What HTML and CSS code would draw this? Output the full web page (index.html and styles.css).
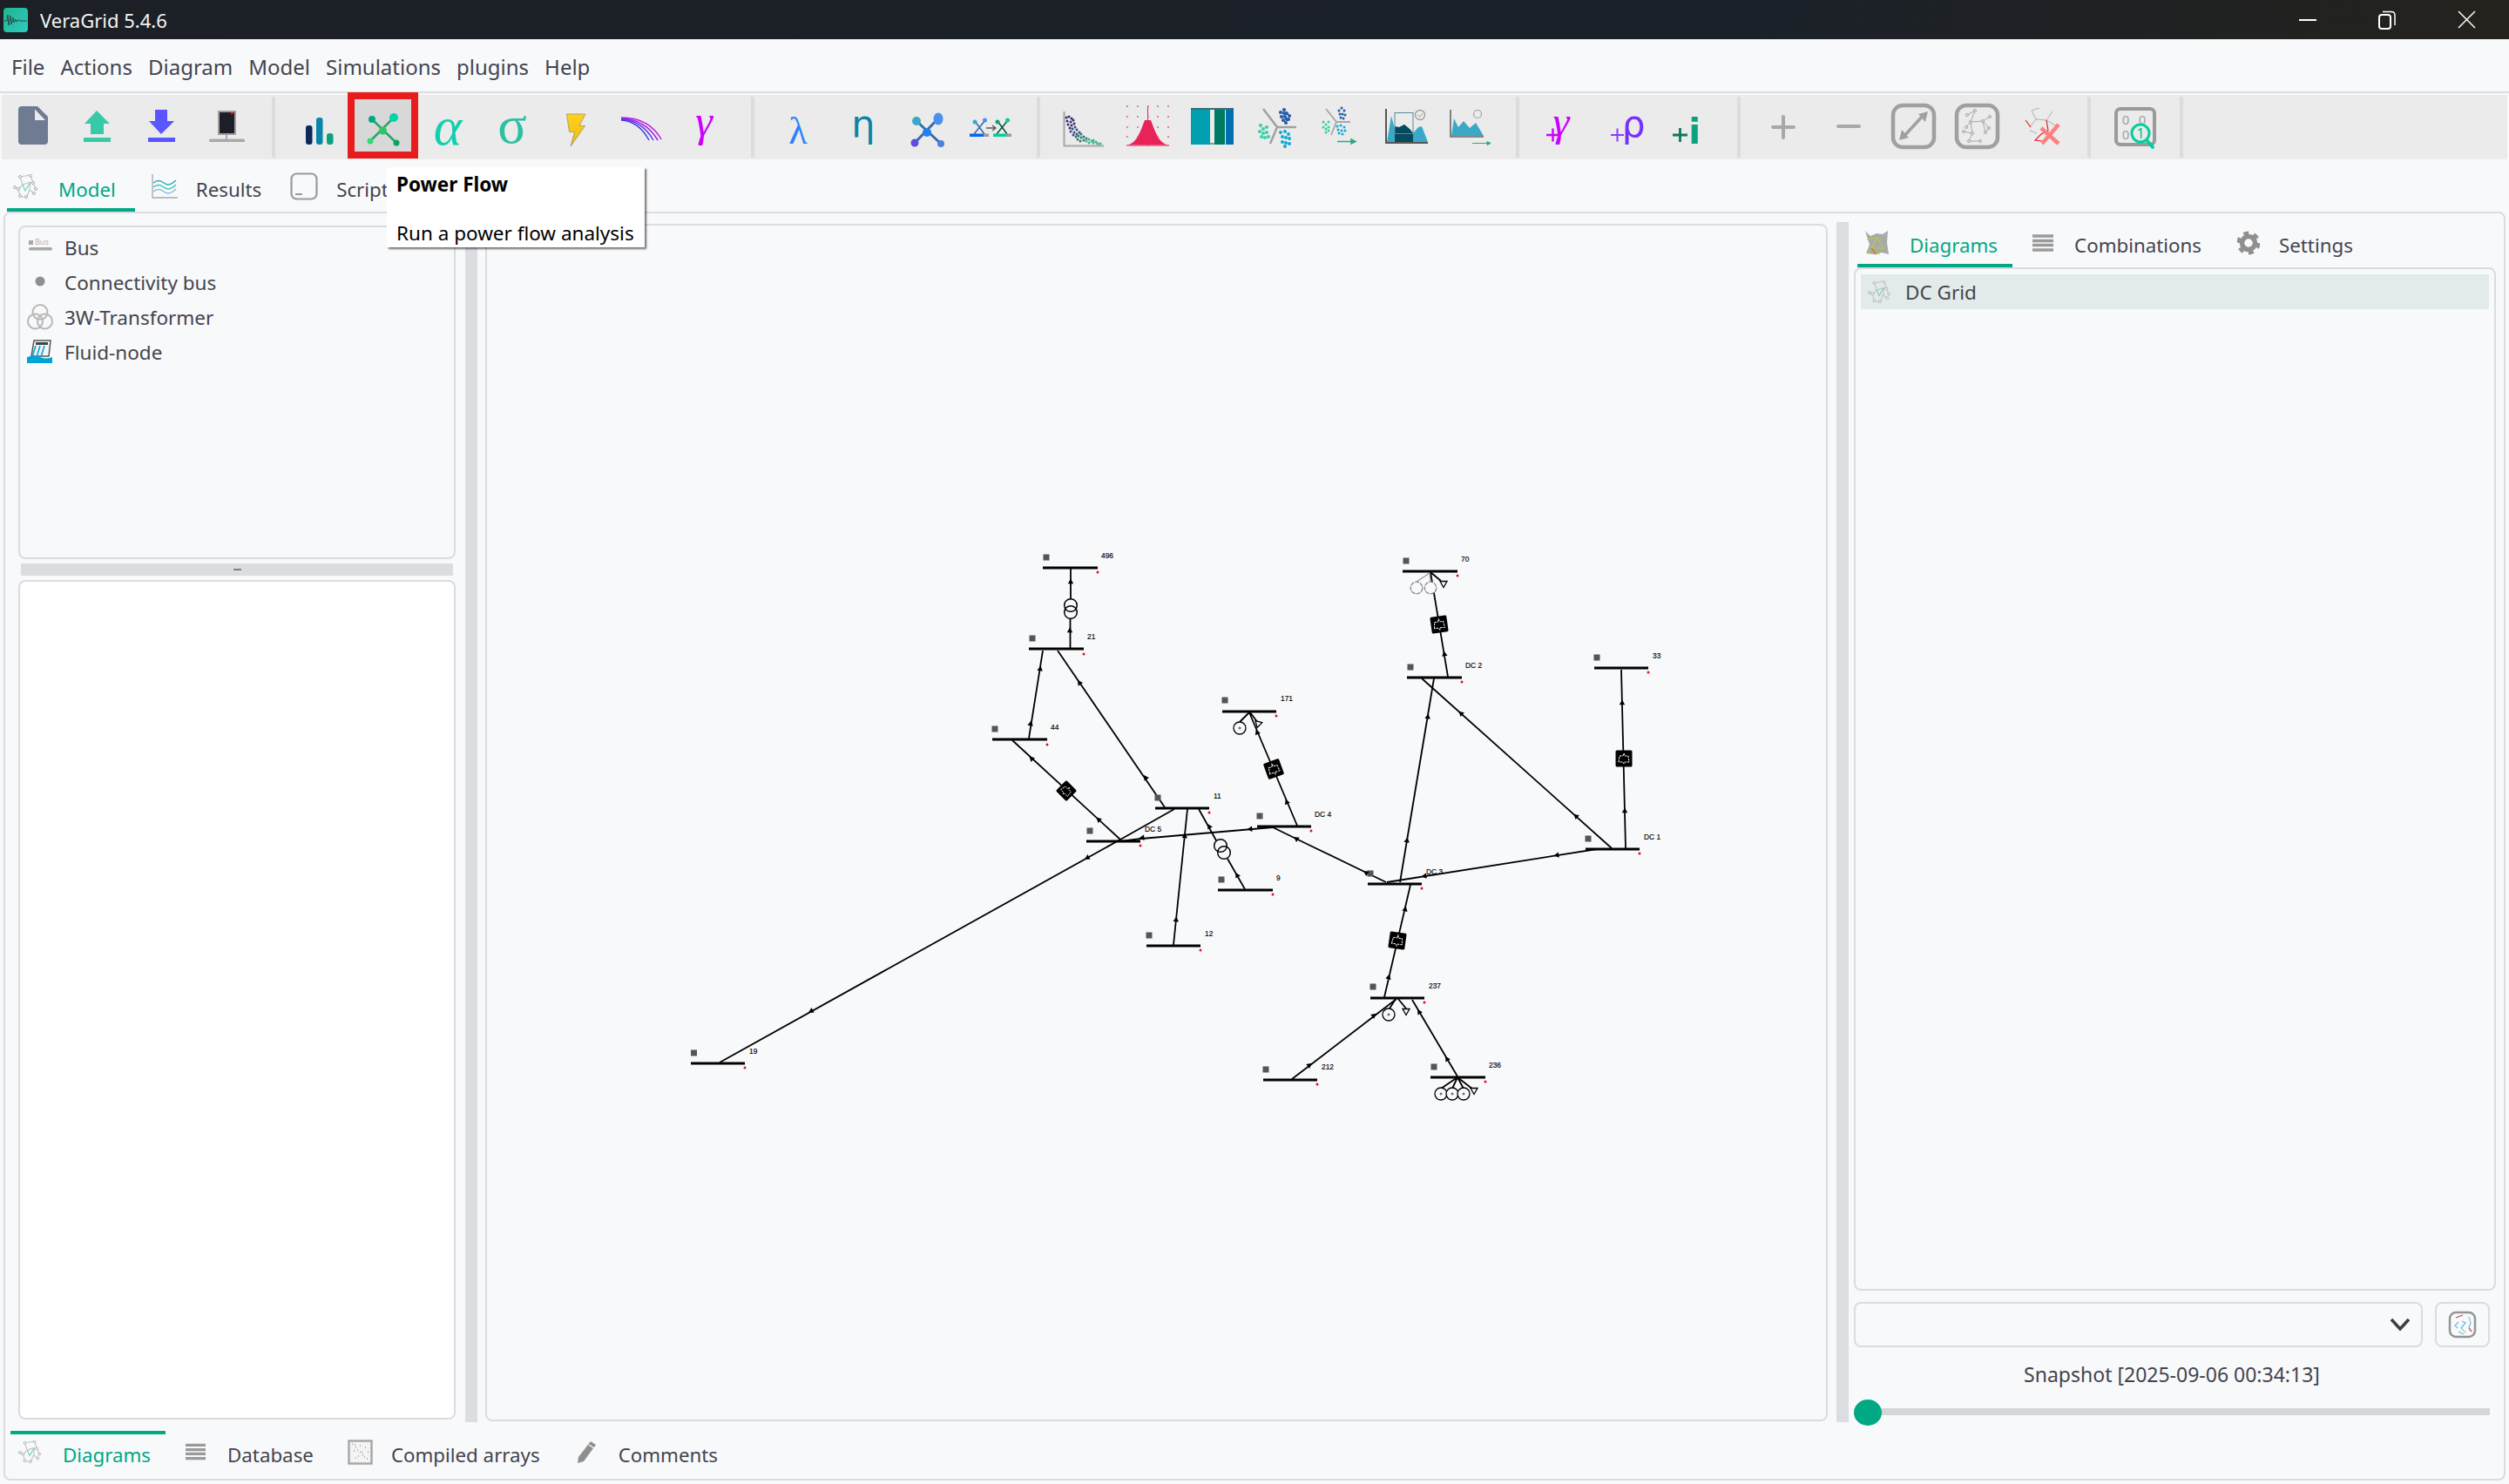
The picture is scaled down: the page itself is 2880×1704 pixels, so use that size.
FILE: index.html
```html
<!DOCTYPE html>
<html lang="en">
<head>
<meta charset="utf-8">
<title>VeraGrid 5.4.6</title>
<link rel="stylesheet" href="styles.css">
</head>
<body>
<svg class="defs" width="0" height="0">
  <defs>
    <symbol id="net" viewBox="0 0 28 28">
      <path d="M8 3 L20 1 M8 3 L11 12 M20 1 L23 10 M23 10 L26 17 M11 12 L20 9 M11 12 L6 17 M6 17 L2 15 M6 17 L8 25 M8 25 L15 27 M19 18 L15 27 M19 18 L24 22 M19 18 L20 9" fill="none" stroke="#c2c4c6" stroke-width="1.2"/>
      <path d="M11 12 L14 19 L20 9" fill="none" stroke="#6fd0c4" stroke-width="1.2"/>
      <g fill="#fff" stroke="#aaa" stroke-width="1"><circle cx="8" cy="3" r="1.5"/><circle cx="20" cy="1.6" r="1.5"/><circle cx="23" cy="10" r="1.5"/><circle cx="26" cy="17" r="1.5"/><circle cx="2" cy="15" r="1.5"/><circle cx="6" cy="17" r="1.5"/><circle cx="8" cy="25" r="1.5"/><circle cx="15" cy="26" r="1.5"/><circle cx="24" cy="22" r="1.5"/></g>
    </symbol>
    <symbol id="lines" viewBox="0 0 24 20">
      <path d="M0 2H24M0 7.500H24M0 12.500H24M0 18H24" stroke="#9a9a9a" stroke-width="3.400"/>
    </symbol>
    <path id="ar" d="M0 -3.500 L3.200 2.300 L-3.200 2.300Z" fill="#000"/>
    <g id="conv">
      <rect x="-9.500" y="-9.500" width="19" height="19" rx="1.500" fill="#000"/>
      <path d="M-6 4 L-5 -3 L-1 -3 L0 -6 L1 -3 L5 -3 L6 4 L1 4 L0 6 L-1 4Z" fill="none" stroke="#fff" stroke-width="1" stroke-dasharray="2.500 1"/>
    </g>
    <g id="gen">
      <circle r="7" fill="#f8f9fb" stroke="#000" stroke-width="1.300"/>
      <circle r="1" fill="none" stroke="#000" stroke-width=".7"/>
    </g>
    <path id="load" d="M-4 -3.500 H4 L0 3.500Z" fill="#f8f9fb" stroke="#000" stroke-width="1.300"/>
  </defs>
</svg>

<header class="titlebar">
  <svg class="app-logo" width="28" height="28" viewBox="0 0 28 28">
    <defs><linearGradient id="lg" x1="0" y1="0" x2="1" y2="1"><stop offset="0" stop-color="#1fb58f"/><stop offset="1" stop-color="#30c9c0"/></linearGradient></defs>
    <rect width="28" height="28" rx="4" fill="url(#lg)"/>
    <path d="M1 15 L4 15 L5 8 L6 20 L8 9 L9 19 L11 11 L12 17 L14 13 L15 16 L17 14 L19 15 L27 15" fill="none" stroke="#2a4a48" stroke-width="1"/>
  </svg>
  <span class="app-name">VeraGrid 5.4.6</span>
  <div class="winctl">
    <svg width="20" height="4" viewBox="0 0 20 4"><path d="M0 2H20" stroke="#fff" stroke-width="2"/></svg>
    <svg width="20" height="22" viewBox="0 0 20 22"><rect x="1" y="5" width="13" height="16" rx="3" fill="none" stroke="#fff" stroke-width="2"/><path d="M5 1.500H15Q19 1.500 19 5.500V17" fill="none" stroke="#fff" stroke-width="1.500"/></svg>
    <svg width="21" height="21" viewBox="0 0 21 21"><path d="M1 1L20 20M20 1L1 20" stroke="#fff" stroke-width="1.500"/></svg>
  </div>
</header>

<nav class="menubar">
  <span>File</span><span>Actions</span><span>Diagram</span><span>Model</span><span>Simulations</span><span>plugins</span><span>Help</span>
</nav>

<div class="toolbar">
  <div class="btn"><svg class="ic" viewBox="2 109 74 74"><path d="M25 122H43L55 134V162Q55 166 51 166H25Q21 166 21 162V126Q21 122 25 122Z" fill="#6f7b92"/><path d="M40 125.500L52 138H40Z" fill="#ebebeb"/></svg></div>
  <div class="btn"><svg class="ic" viewBox="76 109 74 74"><path d="M111 127L126 142H119V154H104V142H97Z" fill="#38c9a7"/><rect x="96" y="158" width="31" height="5" fill="#38c9a7"/></svg></div>
  <div class="btn"><svg class="ic" viewBox="150 109 74 74"><path d="M178 126H192V139H200L185 154L171 139H178Z" fill="#5a55ff"/><rect x="170" y="158" width="31" height="5" fill="#5a55ff"/></svg></div>
  <div class="btn"><svg class="ic" viewBox="224 109 74 74"><rect x="251" y="128" width="19" height="26" fill="#1e1e28" stroke="#a0a0a0" stroke-width="2"/><rect x="265" y="129" width="2.500" height="2.500" fill="#f01010"/><path d="M260 155V160" stroke="#a9a9a9" stroke-width="2"/><rect x="240" y="159.500" width="41" height="3.500" rx="1.500" fill="#a9a9a9"/></svg></div>
  <div class="sep sep-a"></div>
  <div class="btn"><svg class="ic" viewBox="329 109 74 74"><rect x="351" y="144" width="7.500" height="22" rx="3" fill="#0b2a5b"/><rect x="363" y="135" width="7.500" height="31" rx="3" fill="#0a84a8"/><rect x="375" y="153" width="7.500" height="13" rx="3" fill="#0ba37f"/></svg></div>
  <div class="btn btn-on"><svg class="ic" viewBox="403 109 74 74"><path d="M427 137L455 164M452 135L425 162" stroke="#2ea567" stroke-width="2.500"/><circle cx="427" cy="137" r="4" fill="#00a887"/><circle cx="452" cy="135" r="5" fill="#00d4a8"/><circle cx="425" cy="162" r="3.500" fill="#2edd77"/><circle cx="455" cy="164" r="3.500" fill="#0aa55a"/><circle cx="439.500" cy="150" r="4.500" fill="#2fc46a"/></svg></div>
  <div class="btn"><svg class="ic" viewBox="477 109 74 74"><text class="gr it" x="514" y="166" font-size="62" fill="#14cfae">α</text></svg></div>
  <div class="btn"><svg class="ic" viewBox="551 109 74 74"><text class="gr" x="588" y="164" font-size="62" fill="#2cc0a4">σ</text></svg></div>
  <div class="btn"><svg class="ic" viewBox="625 109 74 74"><defs><linearGradient id="bolt" x1="0" y1="0" x2="0" y2="1"><stop offset="0" stop-color="#ffd21e"/><stop offset="1" stop-color="#f2b90f"/></linearGradient></defs><path d="M650.500 131H672L665 144.500H671.500L655 168L659.500 151.500H653.500Z" fill="url(#bolt)" stroke="#8a8a70" stroke-width=".7"/></svg></div>
  <div class="btn"><svg class="ic" viewBox="699 109 74 74"><g fill="none" stroke-width="1.500"><path d="M713 135Q745 135 759 160" stroke="#c020e0"/><path d="M713 136Q741 137 755 161" stroke="#9a20f0"/><path d="M713 137Q737 138 750 161" stroke="#6a30f0"/><path d="M713 138Q733 139 745 161" stroke="#4040e8"/></g></svg></div>
  <div class="btn"><svg class="ic" viewBox="773 109 74 74"><text class="gr it" x="808" y="156" font-size="50" fill="#cc00ff">γ</text></svg></div>
  <div class="sep"></div>
  <div class="btn"><svg class="ic" viewBox="879 109 74 74"><text class="gr" x="916" y="165" font-size="44" fill="#2a82ff">λ</text></svg></div>
  <div class="btn"><svg class="ic" viewBox="953 109 74 74"><text class="dj" x="991" y="157" font-size="43" fill="#0c84a8">η</text></svg></div>
  <div class="btn"><svg class="ic" viewBox="1027 109 74 74"><path d="M1052 139L1080 165M1077 136L1050 164" stroke="#3a6aa8" stroke-width="3"/><circle cx="1052" cy="139" r="5" fill="#3aa6c9"/><ellipse cx="1077" cy="136.500" rx="5.500" ry="7" fill="#4a90ee"/><circle cx="1050" cy="164" r="4.500" fill="#5b50e0"/><circle cx="1080" cy="165" r="4" fill="#4a80d8"/><circle cx="1064" cy="152" r="5" fill="#2080f0"/></svg></div>
  <div class="btn"><svg class="ic" viewBox="1101 109 74 74"><path d="M1119 139L1130 154M1131 138L1118 154" stroke="#3a6aa8" stroke-width="1.600"/><circle cx="1119" cy="140" r="2.500" fill="#3aa6c9"/><circle cx="1130.500" cy="138" r="2.500" fill="#4a90ee"/><rect x="1113" y="153.500" width="16" height="3.500" fill="#0a66f0"/><rect x="1129" y="153.500" width="6" height="3.500" fill="#9a9aa8"/><path d="M1145 139L1156 154M1157 138L1144 154" stroke="#085a3a" stroke-width="1.600"/><circle cx="1145" cy="140" r="2.500" fill="#0aa080"/><circle cx="1156.500" cy="138" r="2.500" fill="#00cfa0"/><rect x="1140" y="153.500" width="15" height="3.500" fill="#00cfa0"/><rect x="1155" y="153.500" width="6" height="3.500" fill="#9a9aa8"/><path d="M1132 147H1142M1139 144L1143 147L1139 150" fill="none" stroke="#555" stroke-width="1.300"/></svg></div>
  <div class="sep"></div>
  <div class="btn"><svg class="ic" viewBox="1207 109 74 74"><path d="M1221.500 128V167.500H1267" fill="none" stroke="#a8a8a8" stroke-width="2"/><g fill="none" stroke-linecap="round" stroke-width="3"><path d="M1224 135h0M1227 134h0M1230 136h0M1225 139h0M1229 140h0M1232 138h0M1226 143h0M1230 144h0M1233 142h0M1228 147h0" stroke="#3a2a6e"/><path d="M1231 148h0M1234 146h0M1229 151h0M1233 152h0M1236 149h0M1232 155h0M1236 154h0M1239 152h0" stroke="#2f4f7f"/><path d="M1235 157h0M1238 156h0M1241 154h0M1237 160h0M1241 158h0M1244 157h0M1240 162h0M1244 161h0M1247 159h0" stroke="#2f7a70"/><path d="M1247 162h0M1250 160h0M1250 164h0M1253 162h0M1255 164h0M1258 163h0M1260 165h0M1263 165h0M1255 161h0" stroke="#3fb58a"/></g></svg></div>
  <div class="btn"><svg class="ic" viewBox="1281 109 74 74"><path d="M1293 166.500C1305 166 1310 148 1314 138H1321C1325 148 1330 166 1342 166.500Z" fill="#e8235a"/><path d="M1293 167H1342M1317.500 122V167" stroke="#e8235a" stroke-width="1"/><g fill="none" stroke="#d8648a" stroke-linecap="round" stroke-width="2"><path d="M1294 122h0M1306 122h0M1318 122h0M1329 122h0M1341 122h0M1294 134h0M1306 134h0M1318 134h0M1329 134h0M1341 134h0M1294 146h0M1306 146h0M1329 146h0M1341 146h0M1294 157h0M1306 157h0M1329 157h0M1341 157h0"/></g></svg></div>
  <div class="btn"><svg class="ic" viewBox="1355 109 74 74"><rect x="1367" y="124" width="22" height="42" fill="#00a0b0"/><rect x="1394" y="124" width="12" height="42" fill="#007a63"/><rect x="1407" y="124" width="9" height="42" fill="#0070b0"/><rect x="1367" y="124" width="49" height="2" fill="#3a6a78"/><rect x="1389" y="164" width="5" height="2" fill="#8a9aa0"/></svg></div>
  <div class="btn"><svg class="ic" viewBox="1429 109 74 74"><path d="M1450 125L1466 146L1458 165M1466 146H1488" fill="none" stroke="#a0a0a0" stroke-width="2.500"/><g fill="none" stroke-linecap="round"><path d="M1470 129h0M1474 126h0M1477 130h0M1471 134h0M1475 134h0M1479 137h0M1473 138h0M1476 141h0M1480 133h0M1474 130h0M1477 137h0" stroke="#2a5aa8" stroke-width="4.200"/><path d="M1447 144h0M1450 148h0M1454 146h0M1446 151h0M1450 153h0M1454 152h0M1448 157h0M1452 158h0M1456 157h0" stroke="#3ad0a8" stroke-width="4.200"/><path d="M1470 152h0M1475 151h0M1479 154h0M1472 157h0M1476 158h0M1480 159h0M1472 163h0M1476 164h0M1480 165h0M1475 168h0" stroke="#10a8d8" stroke-width="4"/></g></svg></div>
  <div class="btn"><svg class="ic" viewBox="1503 109 74 74"><path d="M1522 125L1534 140L1528 155M1534 140H1550" fill="none" stroke="#a8a8a8" stroke-width="1.800"/><g fill="none" stroke-linecap="round" stroke-width="3"><path d="M1537 127h0M1540 124h0M1543 127h0M1538 131h0M1541 131h0M1544 132h0M1539 135h0M1542 136h0" stroke="#2a5aa8"/><path d="M1519 140h0M1522 143h0M1525 140h0M1519 146h0M1522 148h0M1525 146h0M1522 152h0M1525 150h0" stroke="#3ad0a8"/><path d="M1535 145h0M1539 144h0M1543 146h0M1536 149h0M1540 150h0M1544 150h0M1537 153h0M1541 154h0" stroke="#10a8d8"/></g><path d="M1535 162.500H1555M1551 160L1556 162.500L1551 165Z" fill="#2aa888" stroke="#2aa888" stroke-width="1.500"/></svg></div>
  <div class="btn"><svg class="ic" viewBox="1577 109 74 74"><path d="M1592 163L1597 133L1601 148L1604 148L1612 143L1618 148L1622 153L1628 146L1632 145L1639 163Z" fill="#3aa9c7"/><path d="M1601 163V145L1606 146L1612 143L1618 148L1622 153V163Z" fill="#054a5e"/><rect x="1601" y="129.500" width="21" height="24" fill="none" stroke="#5a8a9a" stroke-width="1"/><path d="M1591 125V164H1639" fill="none" stroke="#555" stroke-width="2"/><circle cx="1630" cy="132" r="5.500" fill="#ebebeb" stroke="#a0a0a0" stroke-width="1.400"/><path d="M1627 132L1630 134L1633 130" fill="none" stroke="#a0a0a0"/></svg></div>
  <div class="btn"><svg class="ic" viewBox="1651 109 74 74"><path d="M1666 156L1669 136L1674 146L1680 139L1687 147L1694 141L1703 156Z" fill="#3aa9c7"/><path d="M1665 126V157H1703" fill="none" stroke="#666" stroke-width="1.600"/><circle cx="1696" cy="131" r="4.500" fill="#ebebeb" stroke="#a0a0a0" stroke-width="1.200"/><path d="M1690 164.500H1710M1707 162.500L1711 164.500L1707 166.500Z" fill="#2aa888" stroke="#2aa888"/></svg></div>
  <div class="sep sep-b"></div>
  <div class="btn"><svg class="ic" viewBox="1752 109 74 74"><path d="M1775 155H1790M1782.500 147.500V162.500" stroke="#cc00ff" stroke-width="2.400"/><text class="gr it" x="1792" y="156" font-size="48" fill="#cc00ff">γ</text></svg></div>
  <div class="btn"><svg class="ic" viewBox="1826 109 74 74"><path d="M1849 155H1864M1856.500 147.500V162.500" stroke="#8a3dff" stroke-width="2"/><text class="dj" x="1875" y="157" font-size="42" fill="#7a2dff">ρ</text></svg></div>
  <div class="btn"><svg class="ic" viewBox="1900 109 74 74"><path d="M1920 155H1937M1928.500 147V163" stroke="#0a7a62" stroke-width="2.800"/><text class="dj dj-b" x="1945" y="165" font-size="40" fill="#0ba37f">i</text></svg></div>
  <div class="sep sep-c"></div>
  <div class="btn"><svg class="ic" viewBox="2010 109 74 74"><path d="M2035 146H2059M2047 134V158" stroke="#a8a8a8" stroke-width="4" stroke-linecap="round"/></svg></div>
  <div class="btn"><svg class="ic" viewBox="2084 109 74 74"><path d="M2110 145H2134" stroke="#a8a8a8" stroke-width="4" stroke-linecap="round"/></svg></div>
  <div class="btn"><svg class="ic" viewBox="2158 109 74 74"><rect x="2173" y="121" width="47" height="48" rx="11" fill="none" stroke="#a0a0a0" stroke-width="4.500"/><path d="M2185 157L2208 132" stroke="#a0a0a0" stroke-width="3.500"/><path d="M2180 161L2183 149L2191 158ZM2213 128L2210 140L2202 131Z" fill="#a0a0a0"/></svg></div>
  <div class="btn"><svg class="ic" viewBox="2232 109 74 74"><rect x="2246" y="121" width="47" height="48" rx="11" fill="none" stroke="#a0a0a0" stroke-width="4.500"/><path d="M2267 127L2258 132M2267 127L2262 140L2257 146M2262 140L2276 139L2284 134M2276 139L2283 147M2262 140L2264 153L2254 151M2264 153L2260 162L2273 162M2276 139L2279 152M2283 147L2279 152" fill="none" stroke="#a8a8a8" stroke-width="1"/><g fill="#ebebeb" stroke="#999" stroke-width=".9"><circle cx="2267" cy="127" r="1.500"/><circle cx="2258" cy="132" r="1.500"/><circle cx="2262" cy="140" r="1.500"/><circle cx="2257" cy="146" r="1.500"/><circle cx="2276" cy="139" r="1.500"/><circle cx="2284" cy="134" r="1.500"/><circle cx="2283" cy="147" r="1.500"/><circle cx="2264" cy="153" r="1.500"/><circle cx="2254" cy="151" r="1.500"/><circle cx="2260" cy="162" r="1.500"/><circle cx="2273" cy="162" r="1.500"/><circle cx="2279" cy="152" r="1.500"/></g></svg></div>
  <div class="btn"><svg class="ic" viewBox="2306 109 74 74"><path d="M2341 124L2332 127L2337 137L2330 146M2337 137L2349 138L2356 128M2349 138L2361 145M2330 150L2338 153" fill="none" stroke="#b0b0b0" stroke-width="1"/><path d="M2325 138L2331 146M2349 138L2351 150L2343 154L2336 161L2344 162" fill="none" stroke="#e0202a" stroke-width="1.200"/><path d="M2343 147L2363 165M2363 143L2344 165" stroke="#ff8080" stroke-width="4.500"/></svg></div>
  <div class="sep sep-d"></div>
  <div class="btn"><svg class="ic" viewBox="2418 109 74 74"><rect x="2429" y="125" width="44" height="41" rx="5" fill="none" stroke="#9a9a9a" stroke-width="4"/><text class="sm-zero" x="2440" y="143">0</text><text class="sm-zero" x="2459" y="143">0</text><text class="sm-zero" x="2440" y="160">0</text><circle cx="2457" cy="153" r="10" fill="#ebebeb" stroke="#00d0a0" stroke-width="3"/><text class="sm-one" x="2457" y="159">1</text><path d="M2464 161L2471 169" stroke="#00d0a0" stroke-width="4" stroke-linecap="round"/></svg></div>
  <div class="sep sep-e"></div>
</div>

<div class="tabs-top">
  <div class="tab tab-on tab-model"><svg class="tab-i" width="28" height="28"><use href="#net"/></svg><span>Model</span></div>
  <div class="tab tab-res"><svg class="tab-i" width="30" height="28" viewBox="0 0 30 28"><path d="M1 0V27H30" fill="none" stroke="#a8a8a8" stroke-width="1.300"/><path d="M2 10Q8 5 14 10T28 7" fill="none" stroke="#2aa8c8" stroke-width="1.400"/><path d="M2 15Q8 10 14 15T28 12" fill="none" stroke="#38c8a8" stroke-width="1.400"/><path d="M2 20Q8 15 14 20T28 17" fill="none" stroke="#88b8e8" stroke-width="1.400"/></svg><span>Results</span></div>
  <div class="tab tab-scr"><svg class="tab-i" width="32" height="32" viewBox="0 0 32 32"><rect x="1.500" y="1.500" width="29" height="29" rx="6" fill="none" stroke="#9a9a9a" stroke-width="2.200"/><path d="M6 25H14" stroke="#9a9a9a" stroke-width="2"/></svg><span>Script</span></div>
</div>

<main class="model-panel">
  <div class="upper">
    <section class="left-col">
      <div class="box list-box">
        <div class="li"><svg class="li-i" width="30" height="30" viewBox="0 0 30 30"><rect x="2" y="7" width="5" height="5" fill="#a8a8a8"/><text class="bus-mini" x="9" y="12">Bus</text><rect x="2" y="15" width="27" height="3.500" rx="1.500" fill="#a8a8a8"/></svg><span>Bus</span></div>
        <div class="li"><svg class="li-i" width="30" height="30" viewBox="0 0 30 30"><circle cx="15" cy="14" r="5.500" fill="#8f8f8f"/></svg><span>Connectivity bus</span></div>
        <div class="li"><svg class="li-i" width="30" height="30" viewBox="0 0 30 30" fill="none" stroke="#b8b8b8" stroke-width="2"><circle cx="15" cy="9.500" r="8.500"/><circle cx="9.500" cy="20" r="8.500"/><circle cx="20.500" cy="20" r="8.500"/></svg><span>3W-Transformer</span></div>
        <div class="li"><svg class="li-i" width="30" height="30" viewBox="0 0 30 30"><path d="M8 2H27L25 20H5Z" fill="#f4f6f8" stroke="#555" stroke-width="1.500"/><rect x="10" y="4" width="14" height="3" fill="#444"/><path d="M10 8L6 21M15 8L11 21M20 8L16 21" stroke="#18a8d8" stroke-width="1.800"/><path d="M0 21Q8 18 15 21T29 21V28H0Z" fill="#00a4d4"/></svg><span>Fluid-node</span></div>
      </div>
      <div class="hsplit"><i></i></div>
      <div class="box white-box"></div>
    </section>
    <div class="vsplit"></div>
    <section class="box canvas">
      <svg class="grid-svg" viewBox="559 259 1537 1371" width="1537" height="1371">
        <g class="wires">
          <path d="M1229 652V688M1228.500 710V745"/>
          <path d="M1197 747L1181 848"/>
          <path d="M1214 747L1337 927"/>
          <path d="M1162 850L1286 964"/>
          <path d="M1348 929L1286 964L826 1220"/>
          <path d="M1461 950L1310 963L1286 966"/>
          <path d="M1363 929L1347 1085"/>
          <path d="M1376 929L1396 965M1409 986L1429 1021"/>
          <path d="M1434 818L1489 948M1434 818L1423 829M1435 818L1444 830"/>
          <path d="M1461 950L1500 969L1591 1013"/>
          <path d="M1607 1013L1646 779"/>
          <path d="M1592 1013L1833 975"/>
          <path d="M1632 779L1850 974"/>
          <path d="M1642 657L1662 777M1642 657L1654 667"/>
          <path d="M1861 769L1866 974"/>
          <path d="M1619 1016L1589 1145"/>
          <path d="M1603 1147L1483 1239"/>
          <path d="M1602 1147L1595 1158M1605 1147L1614 1158"/>
          <path d="M1621 1148L1673 1236"/>
          <path d="M1673 1237L1654 1250M1673 1237L1667 1250M1673 1237L1680 1250M1673 1237L1691 1251"/>
        </g>
        <path class="wire-gray" d="M1641 658L1626 668M1641 658L1642 668"/>
        <g class="bars">
          <path d="M1197 652H1260M1181 745H1244M1139 849H1202M1247 966H1309M1326 928H1388M1398 1022H1461M1316 1086H1378M1403 817H1465M1443 949H1505M1610 656H1673M1615 778H1678M1830 767H1892M1820 975H1882M1570 1015H1632M1573 1146H1635M1642 1237H1705M1450 1240H1512M793 1221H855"/>
        </g>
        <g class="squares">
          <rect x="1197.500" y="636.500" width="7" height="7"/><rect x="1181.500" y="729.500" width="7" height="7"/><rect x="1138.500" y="833.500" width="7" height="7"/><rect x="1247.500" y="950.500" width="7" height="7"/><rect x="1325.500" y="912.500" width="7" height="7"/><rect x="1398.500" y="1006.500" width="7" height="7"/><rect x="1315.500" y="1070.500" width="7" height="7"/><rect x="1402.500" y="800.500" width="7" height="7"/><rect x="1442.500" y="933.500" width="7" height="7"/><rect x="1610.500" y="640.500" width="7" height="7"/><rect x="1615.500" y="762.500" width="7" height="7"/><rect x="1829.500" y="751.500" width="7" height="7"/><rect x="1819.500" y="959.500" width="7" height="7"/><rect x="1569.500" y="999.500" width="7" height="7"/><rect x="1572.500" y="1129.500" width="7" height="7"/><rect x="1642.500" y="1221.500" width="7" height="7"/><rect x="1449.500" y="1224.500" width="7" height="7"/><rect x="793" y="1205.500" width="7" height="7"/>
        </g>
        <g class="dots">
          <circle cx="1260" cy="657" r="1.500"/><circle cx="1244" cy="751" r="1.500"/><circle cx="1202" cy="855" r="1.500"/><circle cx="1309" cy="971" r="1.500"/><circle cx="1388" cy="933" r="1.500"/><circle cx="1461" cy="1027" r="1.500"/><circle cx="1378" cy="1091" r="1.500"/><circle cx="1465" cy="822" r="1.500"/><circle cx="1505" cy="954" r="1.500"/><circle cx="1673" cy="661" r="1.500"/><circle cx="1678" cy="783" r="1.500"/><circle cx="1892" cy="772" r="1.500"/><circle cx="1882" cy="980" r="1.500"/><circle cx="1632" cy="1020" r="1.500"/><circle cx="1635" cy="1151" r="1.500"/><circle cx="1705" cy="1242" r="1.500"/><circle cx="1512" cy="1245" r="1.500"/><circle cx="855" cy="1226" r="1.500"/>
        </g>
        <g class="xf"><circle cx="1229" cy="695" r="7.300"/><circle cx="1229" cy="703" r="7.300"/><circle cx="1401" cy="971" r="7.300"/><circle cx="1405" cy="979" r="7.300"/></g>
        <use href="#ar" transform="translate(1229 668)"/><use href="#ar" transform="translate(1228 724)"/>
        <use href="#ar" transform="translate(1194 768) rotate(9)"/><use href="#ar" transform="translate(1183 831) rotate(9)"/>
        <use href="#ar" transform="translate(1239 784) rotate(-34)"/><use href="#ar" transform="translate(1315 893) rotate(-34)"/>
        <use href="#ar" transform="translate(1184 871) rotate(-47)"/><use href="#ar" transform="translate(1261 941) rotate(-47)"/>
        <use href="#ar" transform="translate(1248 985) rotate(-119)"/><use href="#ar" transform="translate(931 1161) rotate(-119)"/>
        <use href="#ar" transform="translate(1435 952) rotate(-95)"/><use href="#ar" transform="translate(1311 962) rotate(-95)"/>
        <use href="#ar" transform="translate(1360 960) rotate(6)"/><use href="#ar" transform="translate(1350 1056) rotate(6)"/>
        <use href="#ar" transform="translate(1388 949) rotate(-30)"/><use href="#ar" transform="translate(1420 1005) rotate(-30)"/>
        <use href="#ar" transform="translate(1443 841) rotate(-23)"/><use href="#ar" transform="translate(1477 921) rotate(-23)"/>
        <use href="#ar" transform="translate(1488 963) rotate(-55)"/><use href="#ar" transform="translate(1568 1002) rotate(-55)"/>
        <use href="#ar" transform="translate(1615 965) rotate(9)"/><use href="#ar" transform="translate(1639 823) rotate(9)"/>
        <use href="#ar" transform="translate(1635 1006) rotate(-99)"/><use href="#ar" transform="translate(1787 982) rotate(-99)"/>
        <use href="#ar" transform="translate(1677 819) rotate(-48)"/><use href="#ar" transform="translate(1809 937) rotate(-48)"/>
        <use href="#ar" transform="translate(1645 677) rotate(-9)"/><use href="#ar" transform="translate(1658 751) rotate(-9)"/>
        <use href="#ar" transform="translate(1862 807)"/><use href="#ar" transform="translate(1865 931)"/>
        <use href="#ar" transform="translate(1613 1044) rotate(13)"/><use href="#ar" transform="translate(1594 1122) rotate(13)"/>
        <use href="#ar" transform="translate(1577 1166) rotate(52)"/><use href="#ar" transform="translate(1503 1223) rotate(52)"/>
        <use href="#ar" transform="translate(1629 1162) rotate(-31)"/><use href="#ar" transform="translate(1661 1216) rotate(-31)"/>
        <use href="#conv" transform="translate(1224 908) rotate(45) scale(.9)"/>
        <use href="#conv" transform="translate(1462 883) rotate(-20)"/>
        <use href="#conv" transform="translate(1652 717) rotate(-8)"/>
        <use href="#conv" transform="translate(1864 871)"/>
        <use href="#conv" transform="translate(1604 1080) rotate(8)"/>
        <use href="#gen" transform="translate(1423 836)"/>
        <use href="#load" transform="translate(1444 832) rotate(15)"/>
        <g class="gray-gens"><circle cx="1626" cy="675" r="6.800"/><circle cx="1642" cy="675" r="6.800"/></g>
        <use href="#load" transform="translate(1657 671)"/>
        <use href="#gen" transform="translate(1594 1165)"/>
        <use href="#load" transform="translate(1614 1162)"/>
        <use href="#gen" transform="translate(1654 1256)"/><use href="#gen" transform="translate(1667 1256)"/><use href="#gen" transform="translate(1680 1256)"/>
        <use href="#load" transform="translate(1692 1253)"/>
        <g class="labels">
          <text x="1264" y="641">496</text><text x="1248" y="734">21</text><text x="1206" y="838">44</text><text x="1314" y="955">DC 5</text><text x="1393" y="917">11</text><text x="1465" y="1011">9</text><text x="1383" y="1075">12</text><text x="1470" y="805">171</text><text x="1509" y="938">DC 4</text><text x="1677" y="645">70</text><text x="1682" y="767">DC 2</text><text x="1897" y="756">33</text><text x="1887" y="964">DC 1</text><text x="1637" y="1004">DC 3</text><text x="1640" y="1135">237</text><text x="1709" y="1226">236</text><text x="1517" y="1228">212</text><text x="860" y="1210">19</text>
        </g>
      </svg>
    </section>
    <div class="vsplit vsplit-r"></div>
    <section class="right-col">
      <div class="tabs-right">
        <div class="tab tab-on tab-dg"><svg class="tab-i" width="28" height="28" viewBox="0 0 28 28"><path d="M1 0L7 6L14 3L21 4L27 0L26 14L28 27L20 25L12 27L2 26L6 16Z" fill="#a8aaa8"/><path d="M3 10L15 8L22 20L8 20L15 8M8 20L17 27M8 20L4 26" fill="none" stroke="#b8c850" stroke-width="1.200"/><path d="M8 20L14 27" stroke="#e06050" stroke-width="1.500"/></svg><span>Diagrams</span></div>
        <div class="tab tab-comb"><svg class="tab-i" width="24" height="20"><use href="#lines"/></svg><span>Combinations</span></div>
        <div class="tab tab-set"><svg class="tab-i" width="26" height="28" viewBox="0 0 26 28"><circle cx="13" cy="14" r="7.500" fill="none" stroke="#8f8f8f" stroke-width="5.500"/><circle cx="13" cy="14" r="11.300" fill="none" stroke="#8f8f8f" stroke-width="4.500" stroke-dasharray="5.900 5.900"/></svg><span>Settings</span></div>
      </div>
      <div class="box diag-box">
        <div class="row-sel"><svg class="row-i" width="26" height="26"><use href="#net"/></svg><span>DC Grid</span></div>
      </div>
      <div class="combo-row">
        <div class="box combo"><svg width="24" height="16" viewBox="0 0 24 16"><path d="M2 2L12 13L22 2" fill="none" stroke="#3d3d45" stroke-width="3.500"/></svg></div>
        <div class="box combo-btn"><svg width="33" height="32" viewBox="0 0 33 32"><rect x="2" y="2" width="29" height="28" rx="7" fill="#f8f9fb" stroke="#959595" stroke-width="2.500"/><path d="M9 8L17 5M12 13L8 17L11 20M16 12L20 14L15 20L20 25M24 7L26 14L24 20L27 24M12 24L18 27" fill="none" stroke-width="1.300" stroke="#6fb8f0"/><path d="M9 8L17 5M24 20L27 24" fill="none" stroke="#e85858" stroke-width="1.300"/><path d="M15 20L20 25M24 7L26 14" fill="none" stroke="#a8e8a0" stroke-width="1.300"/></svg></div>
      </div>
      <div class="snap">Snapshot [2025-09-06 00:34:13]</div>
      <div class="slider"><div class="track"></div><div class="thumb"></div></div>
    </section>
  </div>
  <div class="tabs-bottom">
    <div class="tab tab-on tab-bd"><svg class="tab-i" width="26" height="26"><use href="#net"/></svg><span>Diagrams</span></div>
    <div class="tab tab-db"><svg class="tab-i" width="23" height="20"><use href="#lines"/></svg><span>Database</span></div>
    <div class="tab tab-ca"><svg class="tab-i" width="29" height="29" viewBox="0 0 29 29"><rect x="1.500" y="1.500" width="26" height="26" fill="#f4f4f4" stroke="#a8a8a8" stroke-width="2.500"/><path d="M5 5h1M8 6h1M9 9h1M11 12h1M14 14h1M16 15h1M17 18h1M19 20h1M22 22h1M7 13h1M12 19h1M20 9h1M23 14h1M14 7h1M9 21h1" stroke="#999" stroke-width="1.500"/></svg><span>Compiled arrays</span></div>
    <div class="tab tab-cm"><svg class="tab-i" width="24" height="26" viewBox="0 0 24 26"><path d="M17 1L23 5L9 24L2 26L3 19Z" fill="#8f8f8f"/><path d="M15 5L21 9" stroke="#f8f9fb" stroke-width="1.300"/></svg><span>Comments</span></div>
  </div>
</main>

<aside class="tooltip">
  <b>Power Flow</b>
  <span>Run a power flow analysis</span>
</aside>
</body>
</html>
```

FILE: styles.css
```css
*, *::before { box-sizing: border-box; }
html, body { margin: 0; padding: 0; }
body {
  position: relative;
  width: 2880px;
  height: 1704px;
  overflow: hidden;
  background: #f8f9fb;
  color: #44444e;
  font-family: "Noto Sans", "Open Sans", "Liberation Sans", sans-serif;
  font-size: 22.500px;
  display: flex;
  flex-direction: column;
}
svg { display: block; flex: none; }
.defs { position: absolute; }

.titlebar {
  height: 45px;
  flex: none;
  display: flex;
  align-items: center;
  padding: 0 38px 0 4px;
  background: linear-gradient(90deg, #1c2026 0%, #1b2129 70%, #24221d 100%);
  color: #f4f4f4;
}
.app-logo { margin-right: 14px; }
.app-name { font-size: 22px; }
.winctl { margin-left: auto; display: flex; align-items: center; gap: 71px; }

.menubar {
  height: 62px;
  flex: none;
  display: flex;
  align-items: center;
  gap: 18px;
  padding: 2px 0 0 13px;
  border-bottom: 2px solid #dcdce0;
  font-size: 24px;
}

.toolbar {
  height: 74px;
  flex: none;
  margin: 2px 2px 0;
  display: flex;
  background: #ebebeb;
}
.btn { width: 74px; height: 74px; flex: none; position: relative; }
.ic { width: 74px; height: 74px; position: relative; }
.btn-on::before {
  content: "";
  position: absolute;
  left: -4px;
  top: -3px;
  width: 81px;
  height: 76px;
  background: #d8d8d8;
  border: 8px solid #e81c1c;
}
.sep { width: 4px; height: 70px; margin: 2px 13px 0 15px; background: #dcdce0; flex: none; }
.sep-a { margin-left: 14px; }
.sep-b { margin-right: 8px; }
.sep-c { margin-left: 20px; margin-right: 12px; }
.sep-d { margin-left: 16px; margin-right: 18px; }
.sep-e { margin-left: 10px; }

.gr { font-family: "Liberation Serif", serif; text-anchor: middle; }
.it { font-style: italic; }
.dj { font-family: "DejaVu Sans", sans-serif; text-anchor: middle; }
.dj-b { font-weight: 700; }
.sm-zero { font-size: 15px; fill: #a0a0a0; text-anchor: middle; font-family: "Noto Sans", sans-serif; }
.sm-one { font-size: 16px; fill: #00c090; text-anchor: middle; font-family: "Noto Sans", sans-serif; }

.tab {
  display: flex;
  align-items: center;
  gap: 22px;
  padding: 0 19px 0 7px;
  border-bottom: 4px solid transparent;
  font-size: 22.300px;
}
.tab span { margin-top: 6px; }
.tab-on { color: #00a884; border-bottom-color: #00a884; }

.tabs-top { height: 60px; flex: none; display: flex; padding-left: 8px; gap: 12px; }
.tabs-top .tab { padding-top: 6px; }
.tabs-top .tab-model { gap: 24px; padding-right: 22px; }
.tabs-top .tab-res { gap: 21px; padding-right: 14px; }
.tabs-top .tab-scr { gap: 21px; }

.model-panel {
  flex: 1;
  height: 0;
  margin: 0 4px 4px;
  border: 2px solid #dcdce0;
  border-radius: 8px;
  display: flex;
  flex-direction: column;
}
.upper { height: 1392px; flex: none; display: flex; padding: 10px 0 0 15px; }
.left-col { width: 502px; flex: none; display: flex; flex-direction: column; padding-top: 4px; }
.box { border: 2px solid #dcdce0; border-radius: 8px; }
.list-box { height: 383px; flex: none; padding: 3px 0 0 8px; }
.li { height: 40px; display: flex; align-items: center; gap: 13px; }
.bus-mini { font-size: 9px; fill: #b0b0b0; font-family: "Noto Sans", sans-serif; }
.hsplit {
  height: 14px;
  flex: none;
  margin: 5px 3px;
  background: #dcdde0;
  display: flex;
  align-items: center;
  justify-content: center;
}
.hsplit i { width: 9px; height: 2px; background: #808088; }
.white-box { flex: 1; background: #fff; margin-bottom: 7px; }

.vsplit { width: 14px; height: 1378px; flex: none; margin-left: 11px; background: #dcdde0; }
.vsplit-r { margin-left: 10px; }
.canvas { width: 1541px; height: 1375px; flex: none; margin: 2px 0 0 9px; }
.grid-svg { width: 1537px; height: 1371px; }
.wires path { fill: none; stroke: #000; stroke-width: 1.800; }
.wire-gray { fill: none; stroke: #999; stroke-width: 1.300; }
.bars path { fill: none; stroke: #000; stroke-width: 3.200; }
.squares rect { fill: #555; }
.dots circle { fill: #e01020; }
.xf circle { fill: none; stroke: #000; stroke-width: 1.500; }
.gray-gens circle { fill: #f8f9fb; stroke: #888; stroke-width: 1.300; stroke-dasharray: 5 1; }
.labels text { font-family: "Liberation Sans", sans-serif; font-size: 8.400px; fill: #000; stroke: #000; stroke-width: .15px; }

.right-col { width: 737px; flex: none; margin-left: 6px; display: flex; flex-direction: column; }
.tabs-right { height: 52px; flex: none; display: flex; padding-left: 4px; }
.tabs-right .tab span { margin-top: 4px; }
.tabs-right .tab-dg { padding: 0 17px 0 8px; gap: 24px; }
.tabs-right .tab-comb { padding: 0 0 0 23px; gap: 24px; }
.tabs-right .tab-set { padding: 0 0 0 41px; gap: 22px; }
.diag-box { height: 1175px; flex: none; padding: 6px; }
.row-sel { height: 40px; background: #e2ebe9; display: flex; align-items: center; gap: 17px; padding-left: 8px; }
.combo-row { display: flex; gap: 14px; margin-top: 13px; height: 52px; flex: none; padding-right: 7px; }
.combo { flex: 1; display: flex; align-items: center; justify-content: flex-end; padding-right: 12px; }
.combo-btn { width: 63px; flex: none; display: flex; align-items: center; justify-content: center; }
.snap { height: 60px; flex: none; display: flex; align-items: center; justify-content: center; padding: 2px 7px 0 0; font-size: 23px; }
.slider { position: relative; height: 30px; flex: none; margin-right: 7px; }
.track { margin-top: 10px; height: 8px; background: #d5d6d8; }
.thumb { position: absolute; left: 0; top: 0; width: 32px; height: 30px; border-radius: 50%; background: #00a884; }

.tabs-bottom { display: flex; margin-top: 6px; margin-left: 6px; }
.tabs-bottom .tab {
  height: 54px;
  border-bottom: 0;
  border-top: 4px solid transparent;
  padding: 0 17px 10px 9px;
  gap: 25px;
}
.tabs-bottom .tab span { margin-top: 7px; }
.tabs-bottom .tab-on { border-top-color: #00a884; }
.tabs-bottom .tab-db { margin-left: 14px; padding-right: 20px; }
.tabs-bottom .tab-ca { padding-left: 0; gap: 21px; padding-right: 22px; margin-left: 19px; }
.tabs-bottom .tab-cm { padding-left: 0; margin-left: 19px; }

.tooltip {
  position: absolute;
  left: 444px;
  top: 192px;
  width: 296px;
  height: 92px;
  padding: 6px 11px;
  background: #fff;
  color: #000;
  box-shadow: 2px 2px 2px rgba(0, 0, 0, .55);
  display: flex;
  flex-direction: column;
  gap: 28px;
  line-height: 28px;
  white-space: nowrap;
}
```
